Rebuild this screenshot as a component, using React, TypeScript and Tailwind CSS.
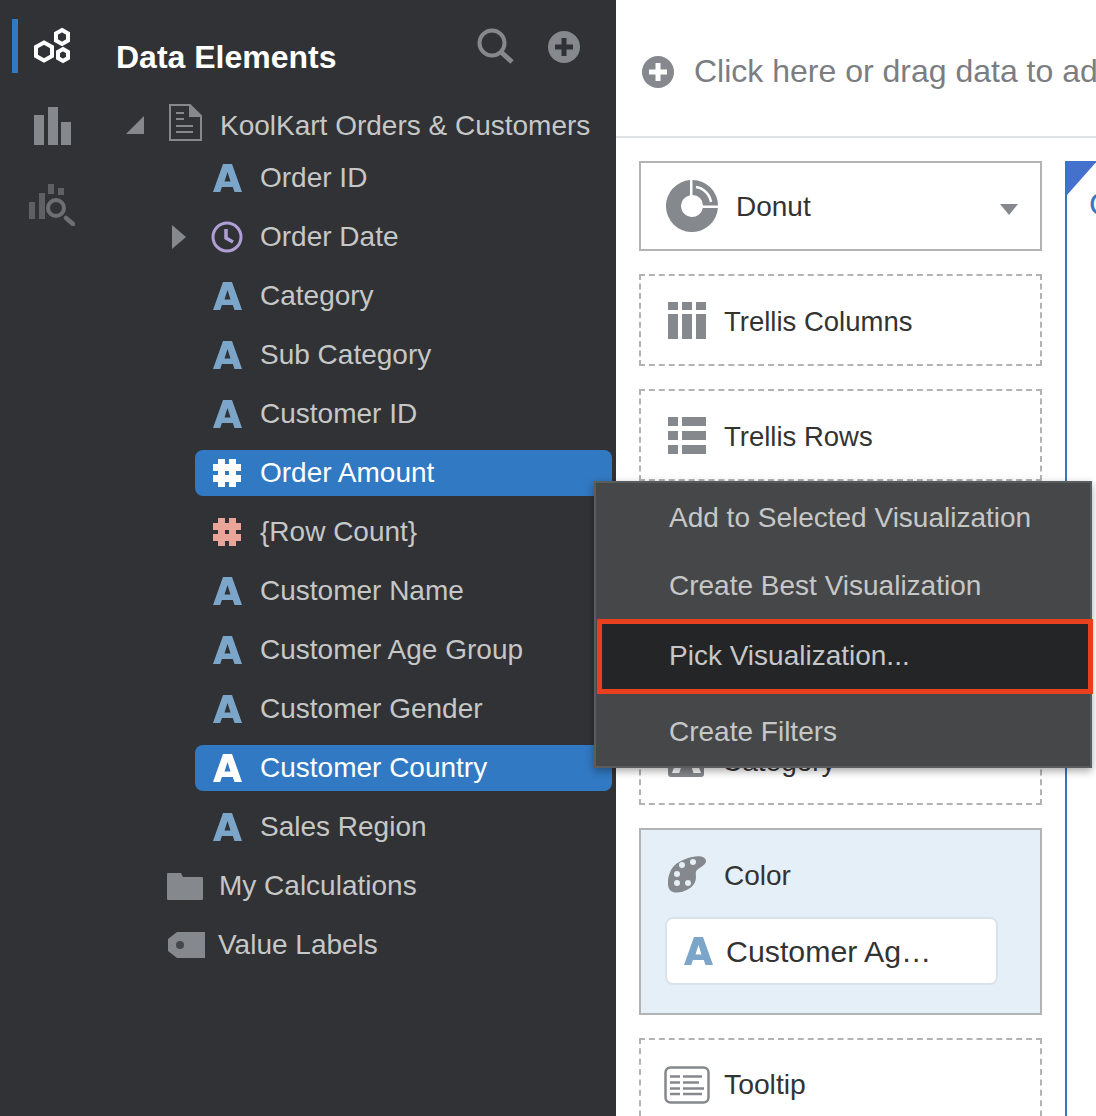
import type { ReactNode } from 'react';

const FONT = "font-['Liberation_Sans',Arial,sans-serif]";

const HexIcon = () => (
  <svg className="shrink-0" width="40" height="38" viewBox="0 0 40 38" fill="none" stroke="#fff" strokeWidth="4">
    <path d="M29 3l6 3.500v7L29 17l-6-3.500v-7z" />
    <path d="M11 15.500l8 4.500v9l-8 4.500-8-4.500v-9z" />
    <path d="M30 22l5 3v6l-5 3-5-3v-6z" />
  </svg>
);

const BarsIcon = () => (
  <svg className="shrink-0" width="38" height="38" viewBox="0 0 38 38" fill="#85888c">
    <rect x="0" y="8" width="10" height="30" />
    <rect x="14" y="0" width="10" height="38" />
    <rect x="27" y="15" width="10" height="23" />
  </svg>
);

const InsightIcon = () => (
  <svg className="shrink-0" width="46" height="42" viewBox="0 0 46 42" fill="#5e6064">
    <rect x="0" y="18" width="6" height="17" />
    <rect x="10" y="9" width="6" height="26" />
    <rect x="19" y="0" width="6" height="10" />
    <rect x="29" y="4" width="6" height="7" />
    <circle cx="27" cy="24" r="8" fill="none" stroke="#6d6f73" strokeWidth="4" />
    <path d="M37 34l7 6" stroke="#6d6f73" strokeWidth="4.500" strokeLinecap="round" />
  </svg>
);

const SearchIcon = () => (
  <svg className="shrink-0" width="38" height="38" viewBox="0 0 38 38" fill="none" stroke="#85888c">
    <circle cx="15" cy="15" r="12.500" strokeWidth="4" />
    <path d="M24 24l11 10" strokeWidth="5" />
  </svg>
);

const PlusCircle = ({ fg, bg = '#85888c' }: { fg: string; bg?: string }) => (
  <svg className="shrink-0" width="32" height="32" viewBox="0 0 32 32">
    <circle cx="16" cy="16" r="16" fill={bg} />
    <path d="M13.500 7h5v6.500H25v5h-6.500V25h-5v-6.500H7v-5h6.500z" fill={fg} />
  </svg>
);

const DocIcon = () => (
  <svg className="shrink-0" width="33" height="37" viewBox="0 0 33 37" fill="none" stroke="#85888c" strokeWidth="2">
    <path d="M1 1h20l11 11v24H1z" />
    <path d="M21 1v11h11" fill="#85888c" />
    <path d="M7 9h8M7 15h8M7 22h17M7 28h17" />
  </svg>
);

const LetterA = ({ color = '#7ba6c9' }: { color?: string }) => (
  <svg className="shrink-0" width="29" height="28" viewBox="0 0 29 28">
    <path fillRule="evenodd" fill={color} d="M10 0h9l10 28h-7.500l-1.700-5H8.900l-1.700 5H0zM14.500 8l-3 9.500h6z" />
  </svg>
);

const ClockIcon = () => (
  <svg className="shrink-0" width="32" height="32" viewBox="0 0 32 32" fill="none" stroke="#b09fd6" strokeWidth="3">
    <circle cx="16" cy="16" r="14" />
    <path d="M15 8v9l7 4" strokeWidth="3.500" />
  </svg>
);

const HashIcon = ({ color }: { color: string }) => (
  <svg className="shrink-0" width="28" height="28" viewBox="0 0 28 28">
    <path
      fillRule="evenodd"
      fill={color}
      d="M5 0h7v5h4V0h7v5h5v7h-5v4h5v7h-5v5h-7v-5h-4v5H5v-5H0v-7h5v-4H0V5h5zM12 12v4h4v-4z"
    />
  </svg>
);

const FolderIcon = () => (
  <svg className="shrink-0" width="36" height="27" viewBox="0 0 36 27" fill="#85888c">
    <path d="M1 0h13l2 4h19a1 1 0 0 1 1 1v21a1 1 0 0 1-1 1H1a1 1 0 0 1-1-1V1a1 1 0 0 1 1-1z" />
  </svg>
);

const TagIcon = () => (
  <svg className="shrink-0" width="37" height="26" viewBox="0 0 37 26">
    <path d="M9 0h28v26H9l-9-7V7z" fill="#85888c" />
    <circle cx="12" cy="13" r="4" fill="#46484b" />
  </svg>
);

const DonutIcon = () => (
  <svg className="shrink-0" width="52" height="52" viewBox="0 0 52 52" fill="#85888c">
    <path fillRule="evenodd" d="M24 .1V15.200A11 11 0 1 0 36.800 28H51.900A26 26 0 1 1 24 .1z" />
    <path d="M26.500 0A25.500 25.500 0 0 1 52 25.500H37A10.500 10.500 0 0 0 26.500 15z" />
    <path d="M30 7A18 18 0 0 1 45 22" fill="none" stroke="#fff" strokeWidth="2.500" />
  </svg>
);

const ColumnsIcon = () => (
  <svg className="shrink-0" width="38" height="37" viewBox="0 0 38 37" fill="#85888c">
    <rect x="0" y="0" width="10" height="8" />
    <rect x="14" y="0" width="10" height="8" />
    <rect x="28" y="0" width="10" height="8" />
    <rect x="0" y="12" width="10" height="25" />
    <rect x="14" y="12" width="10" height="25" />
    <rect x="28" y="12" width="10" height="25" />
  </svg>
);

const RowsIcon = () => (
  <svg className="shrink-0" width="38" height="37" viewBox="0 0 38 37" fill="#85888c">
    <rect x="0" y="0" width="10" height="9" />
    <rect x="14" y="0" width="24" height="9" />
    <rect x="0" y="14" width="10" height="9" />
    <rect x="14" y="14" width="24" height="9" />
    <rect x="0" y="28" width="10" height="9" />
    <rect x="14" y="28" width="24" height="9" />
  </svg>
);

const PaletteIcon = () => (
  <svg className="shrink-0" width="38" height="37" viewBox="0 0 38 37">
    <path
      d="M24 1c8-2 14 0 14 4 0 4-6 6-9 9-3 3 1 8-3 14-4 6-14 10-21 8C-2 34-1 22 3 14 7 7 15 3 24 1z"
      fill="#85888c"
    />
    <g fill="#e4eff8">
      <circle cx="25" cy="6" r="3" />
      <circle cx="14" cy="9" r="3" />
      <circle cx="9" cy="18" r="3" />
      <circle cx="9" cy="27" r="3" />
      <circle cx="20" cy="27" r="3" />
    </g>
  </svg>
);

const TooltipIcon = () => (
  <svg className="shrink-0" width="46" height="38" viewBox="0 0 46 38" fill="none" stroke="#85888c">
    <rect x="1.500" y="1.500" width="43" height="35" rx="5" strokeWidth="2.500" />
    <path d="M6 10.500h10M19 10.500h19M6 16.500h10M19 16.500h16M6 22.500h10M19 22.500h21M6 28h10M19 28h19" strokeWidth="2.500" />
  </svg>
);

function TreeRow({
  icon,
  label,
  selected,
  arrow,
}: {
  icon: ReactNode;
  label: string;
  selected?: boolean;
  arrow?: boolean;
}) {
  return (
    <div className="flex h-[59px] items-center">
      <div className="flex w-[93px] shrink-0 pl-[70px]">
        {arrow && <div className="h-0 w-0 border-y-[12px] border-l-[14px] border-y-transparent border-l-[#85888c]" />}
      </div>
      <div
        className={`mr-[4px] flex h-[46px] flex-1 items-center gap-[19px] rounded-[8px] pl-[18px] ${
          selected ? 'bg-[#3179c2] text-white' : 'text-[#c6c7c7]'
        }`}
      >
        <div className="flex w-[28px] shrink-0 justify-center">{icon}</div>
        <span className="text-[28px] leading-none whitespace-nowrap">{label}</span>
      </div>
    </div>
  );
}

function DashedBox({ icon, label }: { icon: ReactNode; label: string }) {
  return (
    <div className="flex h-[92px] items-center gap-[18px] border-2 border-dashed border-[#b3b3b3] pl-[27px]">
      <div className="flex w-[38px] shrink-0 justify-center">{icon}</div>
      <span className="mt-[3px] text-[27.5px] leading-none text-[#333]">{label}</span>
    </div>
  );
}

const fields: { label: string; icon: ReactNode; selected?: boolean; arrow?: boolean }[] = [
  { label: 'Order ID', icon: <LetterA /> },
  { label: 'Order Date', icon: <ClockIcon />, arrow: true },
  { label: 'Category', icon: <LetterA /> },
  { label: 'Sub Category', icon: <LetterA /> },
  { label: 'Customer ID', icon: <LetterA /> },
  { label: 'Order Amount', icon: <HashIcon color="#fff" />, selected: true },
  { label: '{Row Count}', icon: <HashIcon color="#e9a597" /> },
  { label: 'Customer Name', icon: <LetterA /> },
  { label: 'Customer Age Group', icon: <LetterA /> },
  { label: 'Customer Gender', icon: <LetterA /> },
  { label: 'Customer Country', icon: <LetterA color="#fff" />, selected: true },
  { label: 'Sales Region', icon: <LetterA /> },
];

export default function App() {
  return (
    <div className={`relative flex h-[1116px] w-[1096px] overflow-hidden bg-white ${FONT}`}>
      {/* icon rail */}
      <aside className="flex w-[102px] shrink-0 flex-col bg-[#313235]">
        <div className="mt-[19px] ml-[12px] flex h-[54px] items-center border-l-[6px] border-[#3179c2] pl-[15px]">
          <HexIcon />
        </div>
        <div className="mt-[34px] flex justify-center pl-[4px]">
          <BarsIcon />
        </div>
        <div className="mt-[39px] flex justify-center pl-[1px]">
          <InsightIcon />
        </div>
      </aside>

      {/* data panel */}
      <section className="w-[514px] shrink-0 bg-[#313235]">
        <div className="flex h-[104px] items-start">
          <h2 className="mt-[39px] ml-[14px] text-[32px] leading-[36px] font-bold whitespace-nowrap text-white">
            Data Elements
          </h2>
          <div className="mt-[28px] ml-[140px]">
            <SearchIcon />
          </div>
          <div className="mt-[31px] ml-[33px]">
            <PlusCircle fg="#313235" />
          </div>
        </div>
        <div className="flex h-[44.5px] items-start text-[#c6c7c7]">
          <div className="mt-[12px] ml-[24px] h-0 w-0 border-b-[18px] border-l-[18px] border-b-[#85888c] border-l-transparent" />
          <div className="ml-[25px]">
            <DocIcon />
          </div>
          <span className="mt-[8px] ml-[18px] text-[28px] leading-[28px] whitespace-nowrap">
            KoolKart Orders &amp; Customers
          </span>
        </div>
        {fields.map((f) => (
          <TreeRow key={f.label} {...f} />
        ))}
        <div className="flex h-[59px] items-center pl-[65px] text-[#c6c7c7]">
          <FolderIcon />
          <span className="ml-[16px] text-[28px] leading-none">My Calculations</span>
        </div>
        <div className="flex h-[59px] items-center pl-[66px] text-[#c6c7c7]">
          <TagIcon />
          <span className="ml-[13px] text-[28px] leading-none">Value Labels</span>
        </div>
      </section>

      {/* right side */}
      <main className="flex min-w-0 flex-1 flex-col">
        <div className="flex h-[138px] shrink-0 items-center gap-[20px] border-b-2 border-[#dfe3e6] pt-[8px] pl-[26px]">
          <PlusCircle fg="#fff" />
          <span className="-mt-[2px] text-[32px] leading-none whitespace-nowrap text-[#7b7d81]">
            Click here or drag data to add
          </span>
        </div>
        <div className="flex flex-1 pt-[23px] pl-[23px]">
          <div className="flex w-[403px] shrink-0 flex-col gap-[23px]">
            <div className="flex h-[90px] items-center border-2 border-[#b3b3b3] pr-[22px] pl-[25px]">
              <DonutIcon />
              <span className="mt-[2px] ml-[18px] flex-1 text-[28px] leading-none text-[#333]">Donut</span>
              <div className="mt-[6px] h-0 w-0 border-x-[9px] border-t-[11px] border-x-transparent border-t-[#85888c]" />
            </div>
            <DashedBox icon={<ColumnsIcon />} label="Trellis Columns" />
            <DashedBox icon={<RowsIcon />} label="Trellis Rows" />
            <div className="flex h-[301px] items-end border-2 border-dashed border-[#b3b3b3] pb-[26px] pl-[27px]">
              <div className="flex items-center gap-[18px]">
                <div className="flex h-[36px] w-[36px] items-center justify-center rounded-[3px] bg-[#85888c]">
                  <LetterA color="#fff" />
                </div>
                <span className="mt-[6px] text-[28px] leading-none text-[#333]">Category</span>
              </div>
            </div>
            <div className="h-[187px] border-2 border-[#b3b3b3] bg-[#e4eff8] pt-[26px] pl-[24px]">
              <div className="flex items-center gap-[18px] pl-[3px]">
                <PaletteIcon />
                <span className="mt-[2px] text-[28px] leading-none text-[#333]">Color</span>
              </div>
              <div className="mt-[24px] flex h-[68px] w-[333px] items-center gap-[13px] rounded-[8px] border-2 border-[#dbe3ea] bg-white pl-[17px]">
                <LetterA />
                <span className="mt-[3px] text-[30.300px] leading-none text-[#333]">Customer Ag…</span>
              </div>
            </div>
            <div className="h-[120px] border-2 border-dashed border-[#b3b3b3] pt-[26px] pl-[23px]">
              <div className="flex items-center gap-[14px]">
                <TooltipIcon />
                <span className="-mt-[2px] text-[28.300px] leading-none text-[#333]">Tooltip</span>
              </div>
            </div>
          </div>
          <div className="relative ml-[23px] flex-1 border-l-2 border-[#3179c2]">
            <div className="absolute top-0 left-0 h-0 w-0 border-t-[34px] border-r-[30px] border-t-[#4371cc] border-r-transparent" />
            <span className="mt-[27px] ml-[22px] block text-[32px] leading-none text-[#3179c2]">C</span>
          </div>
        </div>
      </main>

      {/* context menu */}
      <div className="absolute top-[481px] left-[594px] h-[287px] w-[498px] border-2 border-[#5b5c5e] bg-[#464749] text-[28px] leading-none text-[#c6c7c7] shadow-[0_3px_8px_rgba(0,0,0,0.35)]">
        <div className="flex h-[69px] items-center pl-[73px]">Add to Selected Visualization</div>
        <div className="flex h-[68px] items-center pl-[73px]">Create Best Visualization</div>
        <div className="mr-[-3px] ml-[1px] -mt-[1px] flex h-[75px] items-center border-[5px] border-[#e8401f] bg-[#242527] pb-[1px] pl-[67px]">
          Pick Visualization...
        </div>
        <div className="flex h-[74px] items-center pt-[1px] pl-[73px]">Create Filters</div>
      </div>
    </div>
  );
}
